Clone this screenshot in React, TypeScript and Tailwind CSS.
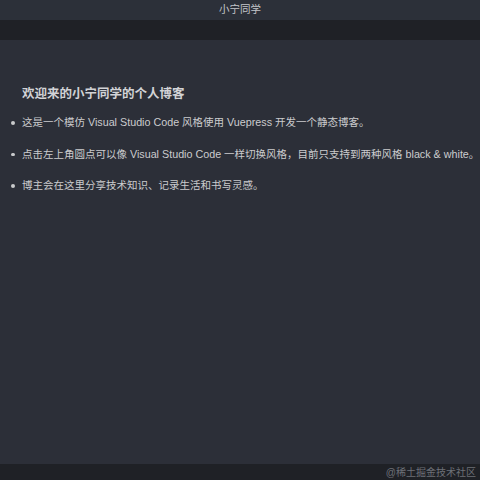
const items = [
  '这是一个模仿 Visual Studio Code 风格使用 Vuepress 开发一个静态博客。',
  '点击左上角圆点可以像 Visual Studio Code 一样切换风格，目前只支持到两种风格 black & white。',
  '博主会在这里分享技术知识、记录生活和书写灵感。',
];

// Latin runs sit a hair larger than the CJK ones in the original
function Mixed({ text }: { text: string }) {
  const parts = text.split(/([A-Za-z][A-Za-z &]*[A-Za-z])/);
  return (
    <>
      {parts.map((p, i) =>
        i % 2 === 1 ? (
          <span key={i} className="text-[10.75px]">{p}</span>
        ) : (
          <span key={i}>{p}</span>
        ),
      )}
    </>
  );
}

export default function App() {
  return (
    <div
      className="flex h-[480px] w-[480px] flex-col overflow-hidden bg-[#2c2f38] text-[#cbccce]"
      style={{ fontFamily: '"Liberation Sans", Arial, "Noto Sans CJK SC", sans-serif' }}
    >
      <div className="flex h-[20px] shrink-0 items-center justify-center bg-[#2c3039] text-[10.5px] text-[#c4c6ca]">
        小宁同学
      </div>
      <div className="h-[20px] shrink-0 bg-[#1f2126]" />
      <main className="flex-1 px-[22px] pt-[46px]">
        <h1 className="text-[12.5px] font-bold leading-[16px] text-[#d2d3d6]">欢迎来的小宁同学的个人博客</h1>
        <ul className="mt-[14px] flex flex-col gap-[19.5px]">
          {items.map(t => (
            <li key={t} className="relative whitespace-nowrap text-[10.5px] leading-[12px]">
              <span className="absolute -left-[11px] top-[5px] h-[3.5px] w-[3.5px] rounded-full bg-[#c9cacc]" />
              <Mixed text={t} />
            </li>
          ))}
        </ul>
      </main>
      <footer className="flex h-[16px] shrink-0 items-center justify-end bg-[#1f2126] pr-[4px] text-[10px] text-[#6d7077]">
        @稀土掘金技术社区
      </footer>
    </div>
  );
}
